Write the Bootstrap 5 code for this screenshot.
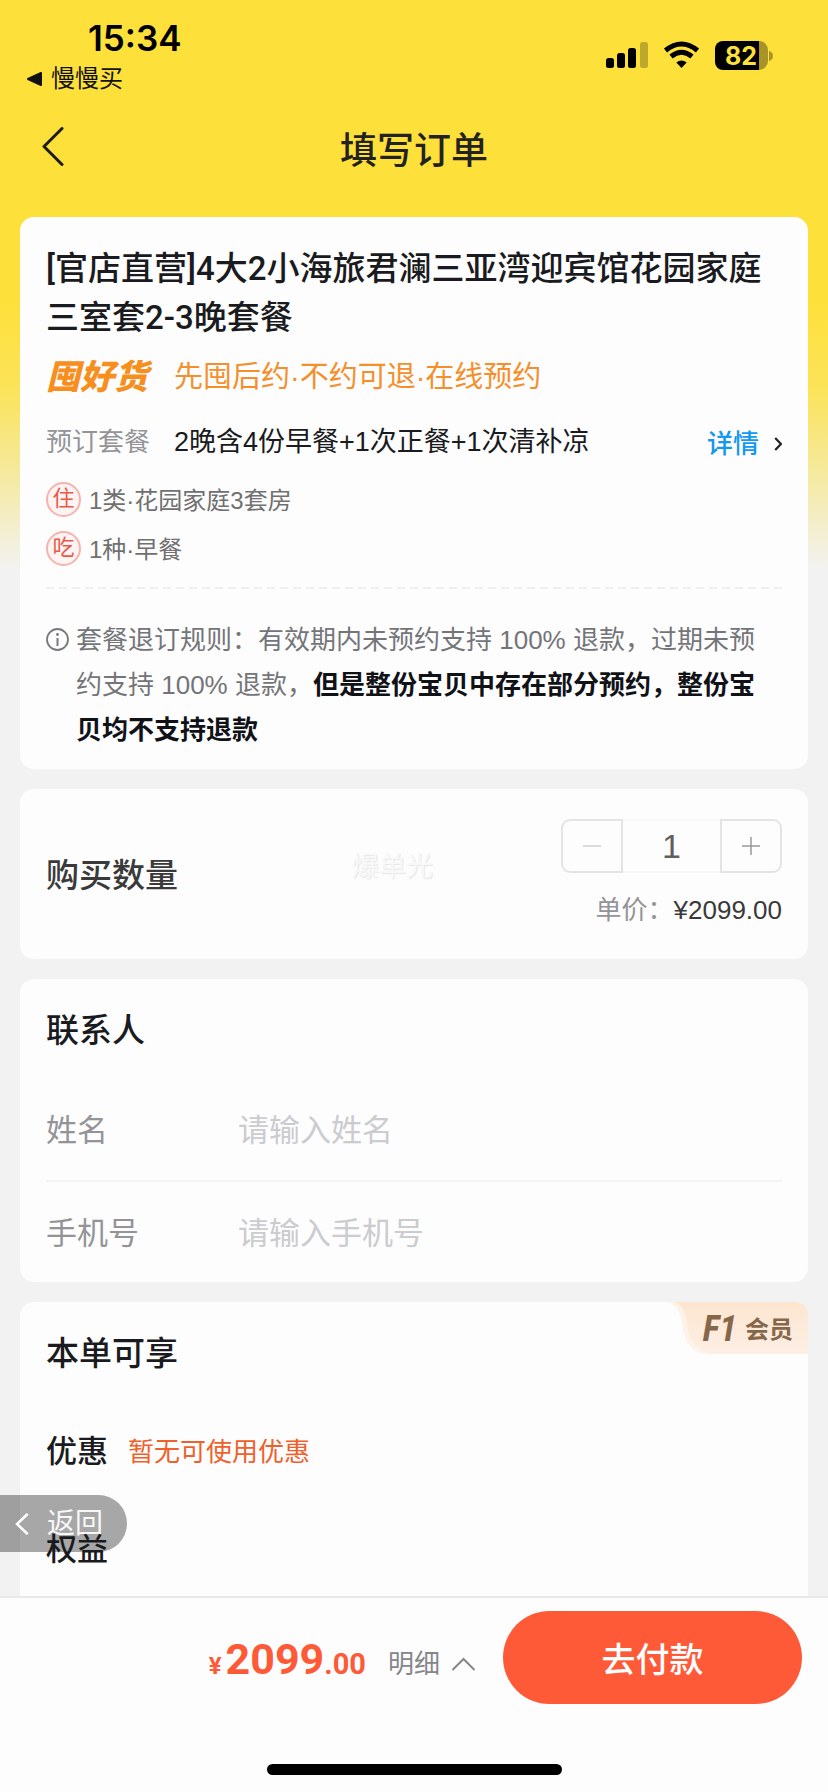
<!DOCTYPE html>
<html lang="zh-CN">
<head>
<meta charset="utf-8">
<meta name="viewport" content="width=device-width, initial-scale=1">
<title>填写订单</title>
<link href="https://cdn.jsdelivr.net/npm/bootstrap@5.3.0/dist/css/bootstrap.min.css" rel="stylesheet">
<style>
  :root { --ink:#1a1b20; --muted:#949498; --orange:#f58f2b; --red:#ff5a38; }
  body { font-family:"Liberation Sans","Noto Sans CJK SC",sans-serif; font-size:26px; line-height:36px; color:var(--ink);
    background:linear-gradient(#fee03a 0, #fee03a 300px, #fbe35a 390px, #f4eaa4 480px, #f2f2f2 570px); }
  svg { flex:none; display:block; }
  button { font-family:inherit; }
  .status { padding:17px 55px 5px 27px; }
  .clock { font:600 35px/42px Inter,sans-serif; color:#000; padding-left:61px; }
  .crumb { font-size:24px; line-height:32px; color:#111; gap:9px; margin-top:4px; }
  .titlebar { height:100px; padding:0 42px; grid-template-columns:80px 1fr 80px; margin-bottom:17px; }
  .titlebar h1 { font-size:37px; font-weight:500; line-height:50px; color:#222; padding-top:4px; }
  .titlebar a { padding-bottom:7px; }
  .panel { background:#fdfdfd; border-radius:14px; padding:0 26px; }
  .stack { padding:0 20px; gap:20px; }
  .head { font-size:33px; line-height:40px; font-weight:500; }
  .product { font-size:33px; line-height:49px; font-weight:500; font-family:Roboto,"Noto Sans CJK SC",sans-serif; }
  .brand { font-size:34px; line-height:40px; font-weight:900; font-style:italic; color:#f78f1e; width:128px; }
  .promo { font-size:29px; line-height:40px; color:var(--orange); }
  .pkg-label { color:var(--muted); width:128px; }
  .pkg-value { font-size:27px; }
  .detail { color:#1498f0; font-weight:500; gap:15px; padding-top:2px; }
  .tag { width:35px; height:35px; line-height:29px; border:2px solid #f6b3ae; border-radius:50%; color:#e8594e; font-size:22px; background:#fff4f2; text-align:center; }
  .incl { font-size:24px; line-height:37px; height:35px; color:#707070; gap:8px; }
  .dash { height:2px; background:repeating-linear-gradient(90deg,#efefef 0 8px,transparent 8px 13px); }
  .rules { line-height:45px; color:#747579; gap:7px; padding-right:10px; }
  .rules strong { color:#111217; font-weight:700; }
  .stepper { height:54px; }
  .stepper button { width:62px; border:2px solid #e4e4e4; background:none; }
  .stepper button:first-child { border-radius:9px 0 0 9px; }
  .stepper button:last-child { border-radius:0 9px 9px 0; }
  .stepper input { width:97px; border:solid #f7f7f7; border-width:2px 0; background:none; text-align:center; font-size:34px; color:#606060; padding:0; }
  .unit { color:var(--muted); margin-top:19px; }
  .unit b { color:#3a3a3a; font-weight:400; }
  .wm { color:#f8f8f8; font-size:27px; left:332px; top:60px; text-shadow:1px 1px 1px #e6e6e6; }
  .field { height:102px; font-size:31px; padding-top:3px; }
  .field + .field { border-top:2px solid #f3f3f3; }
  .field label { width:192px; color:var(--muted); }
  .field input { border:0; background:none; flex:1; min-width:0; outline:0; padding:0; }
  .field input::placeholder { color:#cbcbd0; opacity:1; }
  .perk { font-size:31px; line-height:40px; margin-top:58px; font-weight:500; gap:20px; z-index:3; }
  .perk span { font-size:26px; color:#f0602a; font-weight:400; }
  .member { right:0; top:0; width:141px; height:52px; }
  .member svg { position:absolute; inset:0; }
  .member div { position:relative; color:#86674a; padding:2px 15px 0; gap:8px; line-height:52px; font-size:24px; font-weight:700; }
  .member i { font:italic 700 36px/50px "Liberation Sans Narrow","Roboto Condensed",Roboto,sans-serif; }
  .backpill { left:0; bottom:44px; z-index:2; width:127px; height:57px; border:0; border-radius:0 29px 29px 0; background:rgba(0,0,0,.34); color:#f7f7f7; font-size:28px; padding:0 0 0 15px; gap:18px; }
  .paybar { background:#fdfdfd; border-top:2px solid #e9e9e9; padding:13px 26px 0; }
  .price { font-family:Roboto,sans-serif; font-weight:700; color:var(--red); line-height:44px; gap:4px; padding-top:10px; }
  .y { font-size:24px; } .n { font-size:43px; } .c { font-size:29px; }
  .more { color:#85868a; background:none; border:0; padding:0; gap:11px; margin:12px 27px 0 22px; }
  .pay { width:299px; height:93px; border:0; border-radius:47px; background:var(--red); color:#fff; font-size:34px; font-weight:500; padding:4px 0 0; }
  .home { width:295px; height:11px; border-radius:6px; background:#000; margin:60px auto 17px; }
</style>
</head>
<body class="vh-100 d-flex flex-column overflow-hidden">
<header>
  <div class="status d-flex justify-content-between">
    <div>
      <div class="clock">15:34</div>
      <div class="crumb d-flex align-items-center">
        <svg width="15" height="14" viewBox="0 0 15 14"><path d="M1 7 14 1v12z" stroke="#111" stroke-width="2" stroke-linejoin="round" fill="#111"/></svg>慢慢买
      </div>
    </div>
    <div class="d-flex pt-4">
      <svg width="162" height="30" viewBox="0 0 162 30">
        <rect x="0" y="17" width="8" height="10" rx="2.5"/><rect x="11" y="12" width="8" height="15" rx="2.5"/><rect x="22" y="7" width="8" height="20" rx="2.5"/><rect x="34" y="1" width="8" height="26" rx="2.5" fill-opacity=".25"/>
        <g fill="none" stroke="#000" stroke-width="5"><path d="M59.500 9.500Q75.500-3.500 91.500 9.500"/><path d="M65 15.500Q75.500 7 86 15.500"/></g>
        <path d="M75.500 27l-5.200-5.400q5.200-4.200 10.400 0z"/>
        <path d="M153 0h-36a8 8 0 0 0-8 8v13a8 8 0 0 0 8 8h36z"/><path d="M153 0a9 9 0 0 1 9 9v11a9 9 0 0 1-9 9z" fill-opacity=".34"/>
        <text x="119" y="24" font-family="Inter,sans-serif" font-size="25" font-weight="700" fill="#fee03a">82</text>
      </svg>
      <svg width="5" height="30" viewBox="0 0 5 30"><path d="M1 10q4 1 4 5t-4 5z" fill-opacity=".34"/></svg>
    </div>
  </div>
  <div class="titlebar d-grid align-items-center">
    <a href="#" aria-label="返回上一页"><svg width="22" height="40" viewBox="0 0 22 40"><path d="M20 1.500 2 19.500 20 37.500" fill="none" stroke="#1c1c1c" stroke-width="3" stroke-linecap="round" stroke-linejoin="round"/></svg></a>
    <h1 class="m-0 text-center">填写订单</h1>
  </div>
</header>

<main class="stack d-flex flex-column flex-grow-1 overflow-hidden position-relative">
  <section class="panel" style="padding-top:27px;padding-bottom:16px">
    <h2 class="product m-0">[官店直营]4大2小海旅君澜三亚湾迎宾馆花园家庭三室套2-3晚套餐</h2>
    <div class="d-flex" style="margin-top:15px"><span class="brand">囤好货</span><span class="promo">先囤后约·不约可退·在线预约</span></div>
    <div class="d-flex" style="margin-top:27px">
      <span class="pkg-label">预订套餐</span><span class="pkg-value flex-grow-1">2晚含4份早餐+1次正餐+1次清补凉</span>
      <a href="#" class="detail d-flex align-items-center text-decoration-none">详情<svg width="8" height="14" viewBox="0 0 8 14"><path d="M1.200 1 7 7l-5.800 6" fill="none" stroke="#222" stroke-width="2.200"/></svg></a>
    </div>
    <div class="incl d-flex" style="margin-top:20px"><span class="tag">住</span>1类·花园家庭3套房</div>
    <div class="incl d-flex" style="margin-top:14px"><span class="tag">吃</span>1种·早餐</div>
    <div class="dash" style="margin-top:21px"></div>
    <div class="rules d-flex" style="margin-top:29px">
      <svg width="23" height="45" viewBox="0 0 23 45"><circle cx="11.500" cy="21.500" r="10.500" fill="none" stroke="#77787c" stroke-width="1.800"/><path d="M11.500 20v8" stroke="#77787c" stroke-width="2"/><circle cx="11.500" cy="16.500" r="1.400" fill="#77787c"/></svg>
      <div>套餐退订规则：有效期内未预约支持 100% 退款，过期未预约支持 100% 退款，<strong>但是整份宝贝中存在部分预约，整份宝贝均不支持退款</strong></div>
    </div>
  </section>

  <section class="panel position-relative d-flex align-items-center justify-content-between" style="padding-top:30px;padding-bottom:31px">
    <h2 class="head m-0 pt-1" style="color:#3a3a3a">购买数量</h2>
    <span class="wm position-absolute">爆单光</span>
    <div>
      <div class="stepper d-flex">
        <button type="button" class="d-flex align-items-center justify-content-center" aria-label="减少"><svg width="18" height="18" viewBox="0 0 18 18"><path d="M0 9h18" stroke="#dcdcdc" stroke-width="2"/></svg></button>
        <input type="text" value="1" aria-label="数量">
        <button type="button" class="d-flex align-items-center justify-content-center" aria-label="增加"><svg width="18" height="18" viewBox="0 0 18 18"><path d="M0 9h18M9 0v18" stroke="#999" stroke-width="1.500"/></svg></button>
      </div>
      <div class="unit text-end">单价：<b>¥2099.00</b></div>
    </div>
  </section>

  <section class="panel" style="padding-top:32px">
    <h2 class="head" style="margin:0 0 27px">联系人</h2>
    <div class="field d-flex align-items-center"><label for="nm">姓名</label><input id="nm" type="text" placeholder="请输入姓名"></div>
    <div class="field d-flex align-items-center"><label for="ph">手机号</label><input id="ph" type="tel" placeholder="请输入手机号"></div>
  </section>

  <section class="panel position-relative flex-shrink-0" style="padding-top:32px;padding-bottom:60px">
    <h2 class="head m-0">本单可享</h2>
    <div class="member position-absolute">
      <svg width="141" height="52" viewBox="0 0 141 52"><defs><linearGradient id="g" x2="0" y2="1"><stop stop-color="#fde6d0"/><stop offset="1" stop-color="#fdeee4"/></linearGradient></defs>
        <path d="M0 0Q12 2 15 22 19 50 38 52H60V0z" fill="#fef3e9"/><path d="M6 0Q18 3 20 21 23 50 48 52H141V14Q141 0 127 0z" fill="url(#g)"/></svg>
      <div class="d-flex justify-content-end"><i>F1</i>会员</div>
    </div>
    <div class="perk d-flex position-relative">优惠<span>暂无可使用优惠</span></div>
    <div class="perk d-flex position-relative">权益</div>
  </section>
  <button type="button" class="backpill position-absolute d-flex align-items-center"><svg width="14" height="22" viewBox="0 0 14 22"><path d="M12 1.500 2 11l10 9.500" fill="none" stroke="#fff" stroke-width="2.500" stroke-linecap="round"/></svg>返回</button>
</main>

<footer class="paybar">
  <div class="d-flex align-items-center justify-content-end">
    <div class="price d-flex align-items-baseline"><span class="y">¥</span><span><span class="n">2099</span><span class="c">.00</span></span></div>
    <button type="button" class="more d-flex align-items-center">明细<svg width="25" height="14" viewBox="0 0 25 14"><path d="M1.500 13 12.500 2l11 11" fill="none" stroke="#85868a" stroke-width="2"/></svg></button>
    <button type="button" class="pay">去付款</button>
  </div>
  <div class="home"></div>
</footer>
<script src="https://cdn.jsdelivr.net/npm/bootstrap@5.3.0/dist/js/bootstrap.bundle.min.js"></script>
</body>
</html>
